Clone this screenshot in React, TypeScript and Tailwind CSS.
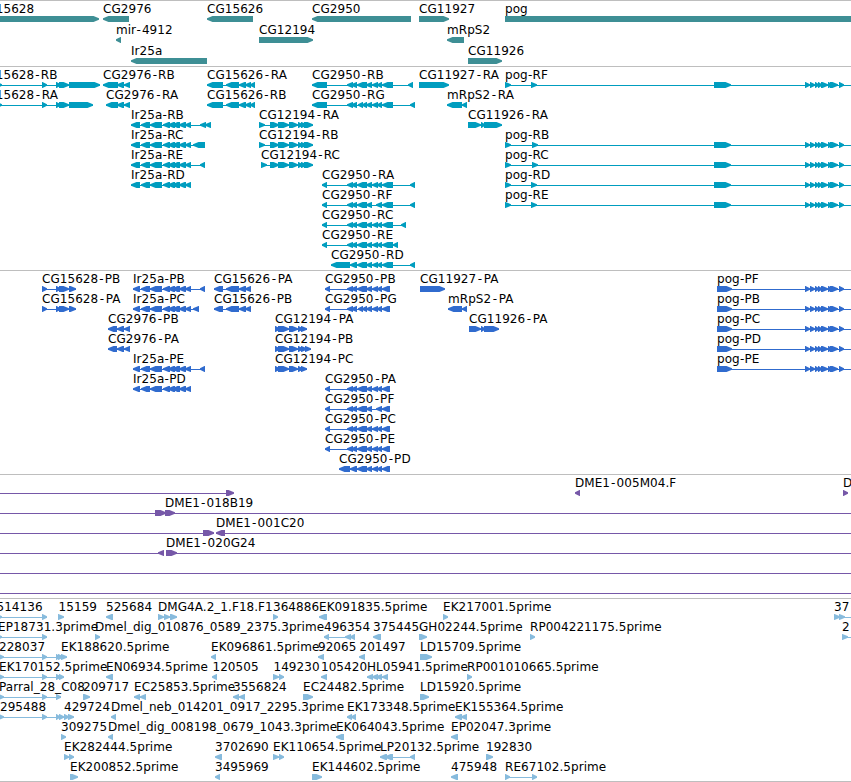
import React from "react";

type Dir = "L" | "R";
type Seg = [number, number, Dir?];

interface Feature {
  row: number;
  label?: string;
  x?: number;
  dir?: Dir;
  segs?: Seg[];
  lines?: [number, number][];
}

interface TrackProps {
  color: string;
  height: number;
  pitch?: number;
  features: Feature[];
}

const WIDTH = 851;

// A feature block: a flat bar whose leading end narrows to a blunt point.
function Block({ x1, x2, top, dir }: { x1: number; x2: number; top: number; dir: Dir }) {
  const w = x2 - x1;
  const head = w <= 6 ? w - 0.5 : 5.5;
  const points =
    dir === "R"
      ? `${x1},${top} ${x2 - head},${top} ${x2},${top + 2.2} ${x2},${top + 3.8} ${x2 - head},${top + 6} ${x1},${top + 6}`
      : `${x2},${top} ${x1 + head},${top} ${x1},${top + 2.2} ${x1},${top + 3.8} ${x1 + head},${top + 6} ${x2},${top + 6}`;
  return <polygon points={points} />;
}

// Labels with a suffix get a little air around the hyphen.
function Label({ text, x, y }: { text: string; x: number; y: number }) {
  const cut = text.indexOf("-");
  if (cut < 0) {
    return (
      <text x={x} y={y} className="fill-black">
        {text}
      </text>
    );
  }
  const narrow = text.startsWith("pog") || text.startsWith("Ir");
  const pad = narrow ? 0.2 : text.endsWith("A") ? 1.6 : 1.1;
  return (
    <text x={x} y={y} className="fill-black">
      {text.slice(0, cut)}
      <tspan dx={pad}>-</tspan>
      <tspan dx={pad}>{text.slice(cut + 1)}</tspan>
    </text>
  );
}

function Glyph({ f, pitch }: { f: Feature; pitch: number }) {
  const top = 15 + f.row * pitch;
  const segs = f.segs ?? [];
  const spans: [number, number][] =
    f.lines ?? (segs.length > 1 ? [[segs[0][0], segs[segs.length - 1][1]]] : []);
  return (
    <g>
      {spans.map(([a, b], i) => (
        <rect key={i} x={a} y={top + 3} width={b - a} height={1} />
      ))}
      {segs.map(([a, b, d], i) => (
        <Block key={i} x1={a} x2={b} top={top} dir={d ?? f.dir ?? "R"} />
      ))}
      {f.label && <Label text={f.label} x={f.x ?? segs[0][0]} y={top - 3} />}
    </g>
  );
}

function Track({ color, height, pitch = 20, features }: TrackProps) {
  return (
    <section className="border-t border-[#bebebe]">
      <svg
        width={WIDTH}
        height={height}
        fill={color}
        className="block overflow-hidden font-['DejaVu_Sans',sans-serif] text-[12px] tracking-[0.05px]"
      >
        {features.map((f, i) => (
          <Glyph key={i} f={f} pitch={pitch} />
        ))}
      </svg>
    </section>
  );
}

const genes: Feature[] = [
  { row: 0, label: "CG15628", x: -22, dir: "R", segs: [[-20, 99]] },
  { row: 0, label: "CG2976", dir: "L", segs: [[103, 129]] },
  { row: 0, label: "CG15626", dir: "L", segs: [[207, 253]] },
  { row: 0, label: "CG2950", dir: "L", segs: [[312, 411]] },
  { row: 0, label: "CG11927", dir: "R", segs: [[419, 449]] },
  { row: 0, label: "pog", dir: "R", segs: [[505, 900]] },
  { row: 1, label: "mir-4912", dir: "L", segs: [[116, 121]] },
  { row: 1, label: "CG12194", dir: "R", segs: [[259, 313]] },
  { row: 1, label: "mRpS2", dir: "L", segs: [[447, 464]] },
  { row: 2, label: "Ir25a", dir: "L", segs: [[131, 207]] },
  { row: 2, label: "CG11926", dir: "R", segs: [[468, 502]] },
];

const irCore: Seg[] = [[141, 150], [150, 162], [163, 170], [168, 175], [172, 180], [179, 186], [185, 191]];
const cgCore: Seg[] = [[347, 353], [351, 357], [357, 367], [366, 372], [372, 378], [377, 382]];
const cgCoreG: Seg[] = [[347, 353], [351, 357], [358, 363], [362, 367], [366, 372], [372, 378], [377, 382]];
const cgCoreF: Seg[] = [[347, 353], [351, 357], [357, 367], [366, 372], [376, 382]];
const pogTail: Seg[] = [[805, 810], [810, 815], [815, 819], [818, 822], [821, 828], [828, 833], [830, 838], [839, 844]];
const cg12194Core: Seg[] = [[270, 279], [278, 289], [289, 298], [298, 303], [301, 307]];
const stem28: Seg[] = [[-3, 2], [42, 47], [56, 61], [59, 69]];

const transcripts: Feature[] = [
  { row: 0, label: "CG15628-RB", x: -22, dir: "R", segs: [...stem28, [69, 100]] },
  { row: 1, label: "CG15628-RA", x: -22, dir: "R", segs: [...stem28, [69, 93]] },
  { row: 0, label: "CG2976-RB", dir: "L", segs: [[103, 118], [117, 124], [124, 130]] },
  { row: 1, label: "CG2976-RA", dir: "L", segs: [[106, 118], [117, 124], [124, 130]] },
  { row: 2, label: "Ir25a-RB", dir: "L", segs: [[131, 140], ...irCore, [200, 206], [205, 211]] },
  { row: 3, label: "Ir25a-RC", dir: "L", segs: [[131, 140], ...irCore, [193, 205]] },
  { row: 4, label: "Ir25a-RE", dir: "L", segs: [[131, 140], ...irCore, [200, 205]] },
  { row: 5, label: "Ir25a-RD", dir: "L", segs: [[131, 140], ...irCore] },
  { row: 0, label: "CG15626-RA", dir: "L", segs: [[207, 223], [226, 239], [239, 246], [245, 251], [250, 255]] },
  { row: 1, label: "CG15626-RB", dir: "L", segs: [[207, 223], [226, 239], [239, 246], [245, 251], [250, 255]] },
  { row: 2, label: "CG12194-RA", dir: "R", segs: [[259, 265], ...cg12194Core, [304, 313]] },
  { row: 3, label: "CG12194-RB", dir: "R", segs: [[259, 265], ...cg12194Core, [304, 313]] },
  { row: 4, label: "CG12194-RC", dir: "R", segs: [[261, 267], ...cg12194Core, [304, 313]] },
  { row: 0, label: "CG2950-RB", dir: "L", segs: [[312, 327], ...cgCore, [382, 393], [408, 413]] },
  { row: 1, label: "CG2950-RG", dir: "L", segs: [[312, 327], ...cgCoreG, [382, 393], [410, 415]] },
  { row: 5, label: "CG2950-RA", dir: "L", segs: [[322, 327], ...cgCore, [382, 393], [410, 415]] },
  { row: 6, label: "CG2950-RF", dir: "L", segs: [[322, 327], ...cgCoreF, [382, 393], [410, 415]] },
  { row: 7, label: "CG2950-RC", dir: "L", segs: [[322, 327], ...cgCore, [382, 393], [401, 406]] },
  { row: 8, label: "CG2950-RE", dir: "L", segs: [[322, 327], ...cgCore, [382, 393], [393, 398]] },
  { row: 9, label: "CG2950-RD", dir: "L", segs: [[331, 350], [350, 357], ...cgCore.slice(2), [382, 393], [410, 415]] },
  { row: 0, label: "CG11927-RA", dir: "R", segs: [[419, 449]] },
  { row: 1, label: "mRpS2-RA", dir: "L", segs: [[447, 462], [462, 467]] },
  { row: 2, label: "CG11926-RA", dir: "R", segs: [[468, 481], [481, 485], [484, 502]] },
  ...(
    [
      [0, "pog-RF", 531],
      [3, "pog-RB", 532],
      [4, "pog-RC", 532],
      [5, "pog-RD", 531],
      [6, "pog-RE", 531],
    ] as [number, string, number][]
  ).map(
    ([row, label, second]): Feature => ({
      row,
      label,
      dir: "R",
      segs: [[505, 511], [second, second + 6], [714, 731], ...pogTail],
      lines: [[505, 851]],
    }),
  ),
];

const proteins: Feature[] = [
  { row: 0, label: "CG15628-PB", dir: "R", segs: [...stem28.slice(1), [69, 76]] },
  { row: 1, label: "CG15628-PA", dir: "R", segs: [...stem28.slice(1), [69, 76]] },
  { row: 2, label: "CG2976-PB", dir: "L", segs: [[108, 117], [117, 124], [124, 130]] },
  { row: 3, label: "CG2976-PA", dir: "L", segs: [[108, 117], [117, 124], [124, 130]] },
  { row: 0, label: "Ir25a-PB", dir: "L", segs: [[133, 140], ...irCore, [200, 205]] },
  { row: 1, label: "Ir25a-PC", dir: "L", segs: [[133, 140], ...irCore, [193, 199]] },
  { row: 4, label: "Ir25a-PE", dir: "L", segs: [[133, 140], ...irCore, [200, 205]] },
  { row: 5, label: "Ir25a-PD", dir: "L", segs: [[133, 140], ...irCore] },
  { row: 0, label: "CG15626-PA", dir: "L", segs: [[214, 223], [226, 239], [239, 246], [245, 251]] },
  { row: 1, label: "CG15626-PB", dir: "L", segs: [[214, 223], [226, 239], [239, 246], [245, 251]] },
  { row: 2, label: "CG12194-PA", dir: "R", segs: [[275, 280], ...cg12194Core.slice(1)] },
  { row: 3, label: "CG12194-PB", dir: "R", segs: [[275, 280], ...cg12194Core.slice(1), [305, 311]] },
  { row: 4, label: "CG12194-PC", dir: "R", segs: [[275, 280], ...cg12194Core.slice(1)] },
  { row: 0, label: "CG2950-PB", dir: "L", segs: [[325, 330], ...cgCore, [382, 390]] },
  { row: 1, label: "CG2950-PG", dir: "L", segs: [[325, 330], ...cgCoreG, [382, 390]] },
  { row: 5, label: "CG2950-PA", dir: "L", segs: [[325, 330], ...cgCore, [382, 390]] },
  { row: 6, label: "CG2950-PF", dir: "L", segs: [[325, 330], ...cgCoreF, [382, 390]] },
  { row: 7, label: "CG2950-PC", dir: "L", segs: [[325, 330], ...cgCore, [382, 390]] },
  { row: 8, label: "CG2950-PE", dir: "L", segs: [[325, 330], ...cgCore, [382, 390]] },
  { row: 9, label: "CG2950-PD", dir: "L", segs: [[339, 350], [350, 357], ...cgCore.slice(2), [382, 390]] },
  { row: 0, label: "CG11927-PA", dir: "R", segs: [[420, 445]] },
  { row: 1, label: "mRpS2-PA", dir: "L", segs: [[448, 462], [462, 467]] },
  { row: 2, label: "CG11926-PA", dir: "R", segs: [[469, 481], [481, 485], [484, 499]] },
  ...["pog-PF", "pog-PB", "pog-PC", "pog-PD", "pog-PE"].map(
    (label, row): Feature => ({
      row,
      label,
      dir: "R",
      segs: [[717, 732], ...pogTail],
      lines: [[717, 851]],
    }),
  ),
];

const bacs: Feature[] = [
  { row: 0, segs: [[226, 234]], lines: [[0, 229]] },
  { row: 0, label: "DME1-005M04.F", dir: "L", segs: [[575, 580]] },
  { row: 0, label: "D", dir: "R", segs: [[843, 848]] },
  { row: 1, label: "DME1-018B19", x: 165, segs: [[155, 166], [165, 175]], lines: [[0, 851]] },
  { row: 2, label: "DME1-001C20", x: 216, segs: [[203, 214], [216, 225, "L"]], lines: [[0, 214], [216, 851]] },
  { row: 3, label: "DME1-020G24", x: 166, segs: [[158, 164, "L"], [166, 177]], lines: [[0, 164], [166, 851]] },
  { row: 4, lines: [[0, 851]] },
  { row: 5, lines: [[0, 851]] },
];

const ests: Feature[] = [
  { row: 0, label: "514136", x: -3.5, segs: [[-3, 2], [42, 47]] },
  { row: 0, label: "15159", x: 58.6, segs: [[58, 64]] },
  { row: 0, label: "525684", dir: "L", segs: [[106, 113]] },
  { row: 0, label: "DMG4A.2_1.F18.F1", segs: [[158, 164], [164, 170], [170, 177]] },
  { row: 0, label: "364886", segs: [[273, 278]] },
  { row: 0, label: "EK091835.5prime", dir: "L", segs: [[319, 327]] },
  { row: 0, label: "EK217001.5prime", segs: [[443, 448]] },
  { row: 0, label: "37", segs: [[834, 840], [839, 845]], lines: [[834, 851]] },
  { row: 1, label: "EP18731.3prime", x: -2, segs: [[-3, 2], [42, 47]] },
  { row: 1, label: "Dmel_dig_010876_0589_2375.3prime", segs: [[95, 100]] },
  { row: 1, label: "496354", dir: "L", segs: [[324, 329], [345, 351], [350, 355]] },
  { row: 1, label: "375445", dir: "L", segs: [[373, 381]] },
  { row: 1, label: "GH02244.5prime", segs: [[419, 427]] },
  { row: 1, label: "RP004221175.5prime", segs: [[530, 535]] },
  { row: 1, label: "2", x: 842, segs: [[842, 848]], lines: [[842, 851]] },
  { row: 2, label: "228037", x: -1, segs: [[-2, 4], [42, 47], [56, 60], [58, 63], [61, 67]] },
  { row: 2, label: "EK188620.5prime", x: 61 },
  { row: 2, label: "EK096861.5prime", dir: "L", segs: [[211, 216]] },
  { row: 2, label: "92065", dir: "L", segs: [[318, 324]] },
  { row: 2, label: "201497", x: 359.5, dir: "L", segs: [[359, 365]] },
  { row: 2, label: "LD15709.5prime", segs: [[420, 432]] },
  { row: 3, label: "EK170152.5prime", x: -1, segs: [[-2, 4], [42, 47], [56, 61], [59, 64]] },
  { row: 3, label: "EN06934.5prime", dir: "L", segs: [[106, 113]] },
  { row: 3, label: "120505", x: 212.5, dir: "L", segs: [[212, 217]] },
  { row: 3, label: "149230", x: 273.5, segs: [[273, 279], [279, 284]] },
  { row: 3, label: "105420", dir: "L", segs: [[321, 327]] },
  { row: 3, label: "HL05941.5prime", dir: "L", segs: [[367, 373], [372, 378], [376, 382], [382, 388]] },
  { row: 3, label: "RP001010665.5prime", segs: [[467, 472]] },
  { row: 4, label: "Parral_28_C08", x: -1, segs: [[-2, 4], [42, 47], [56, 61]] },
  { row: 4, label: "209717", segs: [[83, 90]] },
  { row: 4, label: "EC25853.5prime", dir: "L", segs: [[134, 140], [140, 146]] },
  { row: 4, label: "3556824", dir: "L", segs: [[233, 239], [239, 245]] },
  { row: 4, label: "EC24482.5prime", segs: [[303, 313]] },
  { row: 4, label: "LD15920.5prime", segs: [[420, 429]] },
  { row: 5, label: "295488", x: 0, segs: [[-2, 4], [42, 47], [56, 60], [59, 64], [64, 69], [68, 74]] },
  { row: 5, label: "429724", x: 64 },
  { row: 5, label: "Dmel_neb_014201_0917_2295.3prime", dir: "L", segs: [[111, 116]] },
  { row: 5, label: "EK173348.5prime", dir: "L", segs: [[347, 352], [351, 356]] },
  { row: 5, label: "EK155364.5prime", dir: "L", segs: [[455, 462], [461, 467]] },
  { row: 6, label: "309275", segs: [[61, 66]] },
  { row: 6, label: "Dmel_dig_008198_0679_1043.3prime", dir: "L", segs: [[108, 113]] },
  { row: 6, label: "EK064043.5prime", dir: "L", segs: [[336, 344]] },
  { row: 6, label: "EP02047.3prime", dir: "L", segs: [[451, 458]] },
  { row: 7, label: "EK282444.5prime", segs: [[64, 69], [69, 74]] },
  { row: 7, label: "3702690", dir: "L", segs: [[215, 222]] },
  { row: 7, label: "EK110654.5prime", segs: [[273, 279], [279, 284]] },
  { row: 7, label: "LP20132.5prime", dir: "L", segs: [[380, 387], [385, 393], [410, 415]] },
  { row: 7, label: "192830", segs: [[486, 493]] },
  { row: 8, label: "EK200852.5prime", segs: [[70, 78]] },
  { row: 8, label: "3495969", dir: "L", segs: [[215, 220]] },
  { row: 8, label: "EK144602.5prime", segs: [[312, 322]] },
  { row: 8, label: "475948", dir: "L", segs: [[451, 458]] },
  { row: 8, label: "RE67102.5prime", segs: [[505, 510], [532, 537]] },
];

export default function App() {
  return (
    <main className="flex w-[851px] flex-col overflow-hidden border-b border-[#bebebe] bg-white">
      <Track color="#3e8f95" height={65} pitch={21} features={genes} />
      <Track color="#009dbf" height={203} features={transcripts} />
      <Track color="#306bce" height={203} features={proteins} />
      <Track color="#7658a8" height={123} features={bacs} />
      <Track color="#87bbdd" height={182} features={ests} />
    </main>
  );
}
